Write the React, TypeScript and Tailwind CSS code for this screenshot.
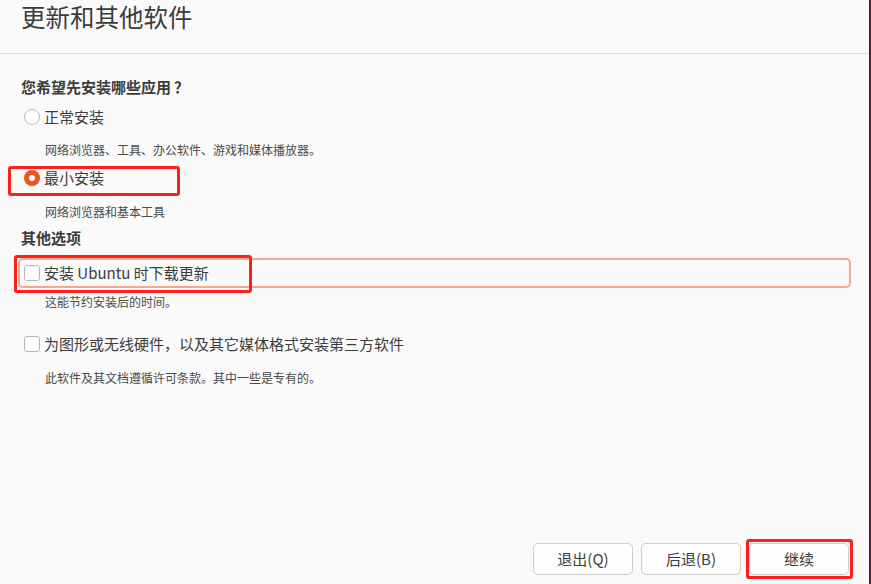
import React from "react"

const font = { fontFamily: '"Noto Sans CJK SC", "Noto Sans", sans-serif' }

function Radio({ checked }: { checked?: boolean }) {
  return checked ? (
    <span className="w-4 h-4 rounded-full bg-[#e95420] flex items-center justify-center shrink-0">
      <span className="w-[6px] h-[6px] rounded-full bg-white" />
    </span>
  ) : (
    <span className="w-4 h-4 rounded-full border border-[#b6b6b6] bg-white shrink-0" />
  )
}

function Checkbox() {
  return <span className="w-4 h-4 rounded-[3px] border border-[#b6b6b6] bg-white shrink-0" />
}

function Desc({ children, className = "" }: { children: React.ReactNode; className?: string }) {
  return <div className={`pl-6 text-[12px] leading-4 text-[#4a4a4a] ${className}`}>{children}</div>
}

export default function App() {
  return (
    <div className="w-[871px] h-[584px] flex bg-[#fafafa] text-[#3c3c3c] overflow-hidden" style={font}>
      <div className="flex-1 flex flex-col">
        {/* Header */}
        <div className="h-[54px] border-b border-[#dcdcdc] pl-[21px] pt-[1px]">
          <h1 className="text-[24.5px] leading-[32px] font-normal">更新和其他软件</h1>
        </div>

        {/* Body */}
        <div className="flex-1 flex flex-col pl-[21px] pr-[18px]">
          <div className="mt-[23px] text-[15px] leading-5 font-bold">
            您希望先安装哪些应用<span className="ml-[3px]">？</span>
          </div>

          <div className="mt-[10px] h-5 flex items-center gap-[4px] pl-[3px] text-[15px]">
            <Radio />
            <span>正常安装</span>
          </div>
          <Desc className="mt-[15px]">网络浏览器、工具、办公软件、游戏和媒体播放器。</Desc>

          <div className="relative mt-[10px] h-5 flex items-center gap-[4px] pl-[3px] text-[15px]">
            <Radio checked />
            <span>最小安装</span>
            <div className="absolute -left-[13px] -top-[2px] w-[172px] h-[30px] border-[3px] border-[#fe1f1f] rounded-[3px]" />
          </div>
          <Desc className="mt-[16px]">网络浏览器和基本工具</Desc>

          <div className="mt-[8px] text-[15px] leading-5 font-bold">其他选项</div>

          <div className="relative mt-[10px] -ml-[3px] h-[30px] border-2 border-[#f4a88d] rounded-[5px] flex items-center gap-[4px] pl-[4px] text-[15px]">
            <Checkbox />
            <span>安装 Ubuntu 时下载更新</span>
            <div className="absolute -left-[6px] -top-[5px] w-[238px] h-[38px] border-[3px] border-[#fe1f1f] rounded-[3px]" />
          </div>
          <Desc className="mt-[6px]">这能节约安装后的时间。</Desc>

          <div className="mt-[24px] h-5 flex items-center gap-[4px] pl-[3px] text-[15px]">
            <Checkbox />
            <span>为图形或无线硬件，以及其它媒体格式安装第三方软件</span>
          </div>
          <Desc className="mt-[16px]">此软件及其文档遵循许可条款。其中一些是专有的。</Desc>

          {/* Buttons */}
          <div className="mt-auto mb-[9px] flex justify-end gap-2 pr-[2px]">
            <button className="w-[100px] h-[32px] rounded-[5px] border border-[#cdcdcd] bg-[#fdfdfd] text-[15px] text-[#3c3c3c]">退出(Q)</button>
            <button className="w-[100px] h-[32px] rounded-[5px] border border-[#cdcdcd] bg-[#fdfdfd] text-[15px] text-[#3c3c3c]">后退(B)</button>
            <div className="relative">
              <button className="w-[100px] h-[32px] rounded-[5px] border border-[#cdcdcd] bg-[#fdfdfd] text-[15px] text-[#3c3c3c]">继续</button>
              <div className="absolute -left-[3px] -right-[4px] -top-[4px] -bottom-[4px] border-[3px] border-[#fe1f1f] rounded-[3px]" />
            </div>
          </div>
        </div>
      </div>
      <div className="w-[2px] bg-[#4a1a36]" />
    </div>
  )
}
